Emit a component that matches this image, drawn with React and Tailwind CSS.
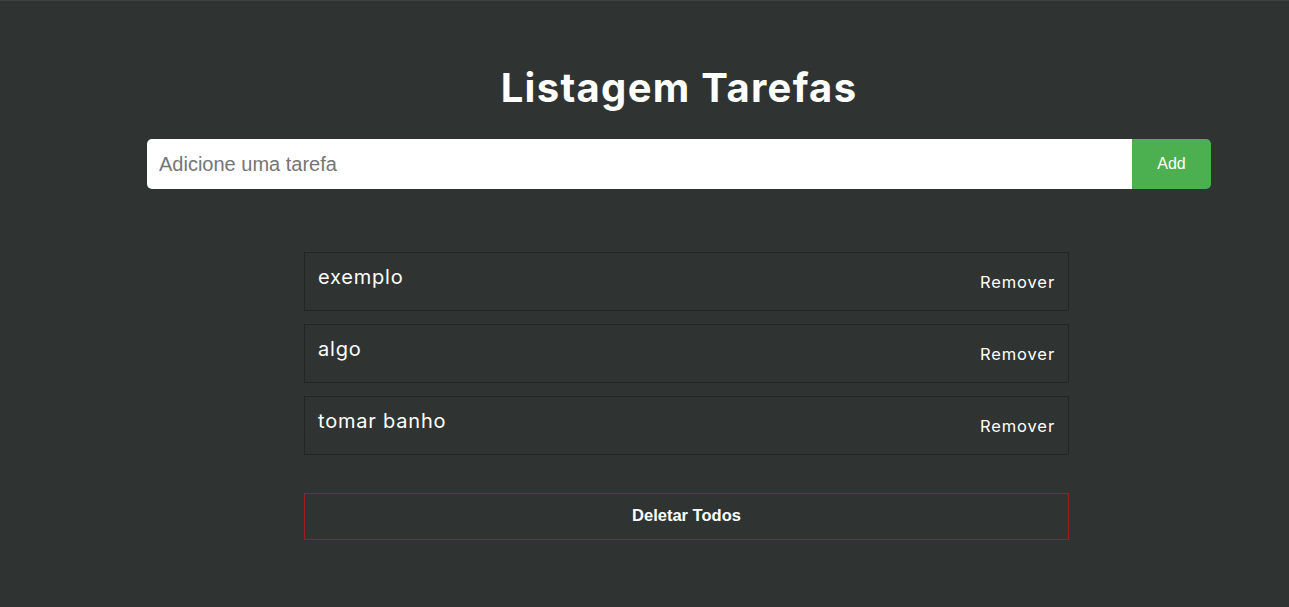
import React, { useState } from 'react';

const App = () => {
  const [tarefas, setTarefas] = useState(['exemplo', 'algo', 'tomar banho']);
  const [texto, setTexto] = useState('');

  const adicionar = () => {
    if (!texto.trim()) return;
    setTarefas([...tarefas, texto]);
    setTexto('');
  };

  return (
    <div className="min-h-screen w-full bg-[#2f3432] border-t border-[#3c4342] font-['Inter',sans-serif]">
      {/* Header + form */}
      <div className="ml-[147px] w-[1064px] flex flex-col items-center">
        <h1 className="mt-[61px] text-[40px] leading-[52px] font-bold text-white tracking-[1.3px]">
          Listagem Tarefas
        </h1>
        <div className="mt-[25px] flex w-full h-[50px]">
          <input
            value={texto}
            onChange={(e) => setTexto(e.target.value)}
            placeholder="Adicione uma tarefa"
            className="flex-1 h-full bg-white rounded-l-[5px] px-3 text-[20px] font-['Liberation_Sans',Arial,sans-serif] text-[#333] placeholder:text-[#757575] outline-none"
          />
          <button
            onClick={adicionar}
            className="w-[79px] h-full bg-[#4caf50] rounded-r-[5px] text-white text-[16px] font-['Liberation_Sans',Arial,sans-serif]"
          >
            Add
          </button>
        </div>
      </div>

      {/* Lista */}
      <ul className="ml-[304px] w-[765px] mt-[63px] flex flex-col gap-[13px]">
        {tarefas.map((t, i) => (
          <li
            key={i}
            className="h-[59px] border border-[#222725] flex items-start justify-between pl-[13px] pr-[13px]"
          >
            <span className="mt-[9px] text-[20px] text-white tracking-[0.8px]">{t}</span>
            <button
              onClick={() => setTarefas(tarefas.filter((_, j) => j !== i))}
              className="mt-[17px] text-[16.5px] text-white tracking-[0.9px]"
            >
              Remover
            </button>
          </li>
        ))}
      </ul>

      <button
        onClick={() => setTarefas([])}
        className="ml-[304px] w-[765px] h-[47px] mt-[38px] pb-[2px] border border-[#a11c1c] text-white font-bold text-[16.5px] font-['Liberation_Sans',Arial,sans-serif]"
      >
        Deletar Todos
      </button>
    </div>
  );
};

export default App;
